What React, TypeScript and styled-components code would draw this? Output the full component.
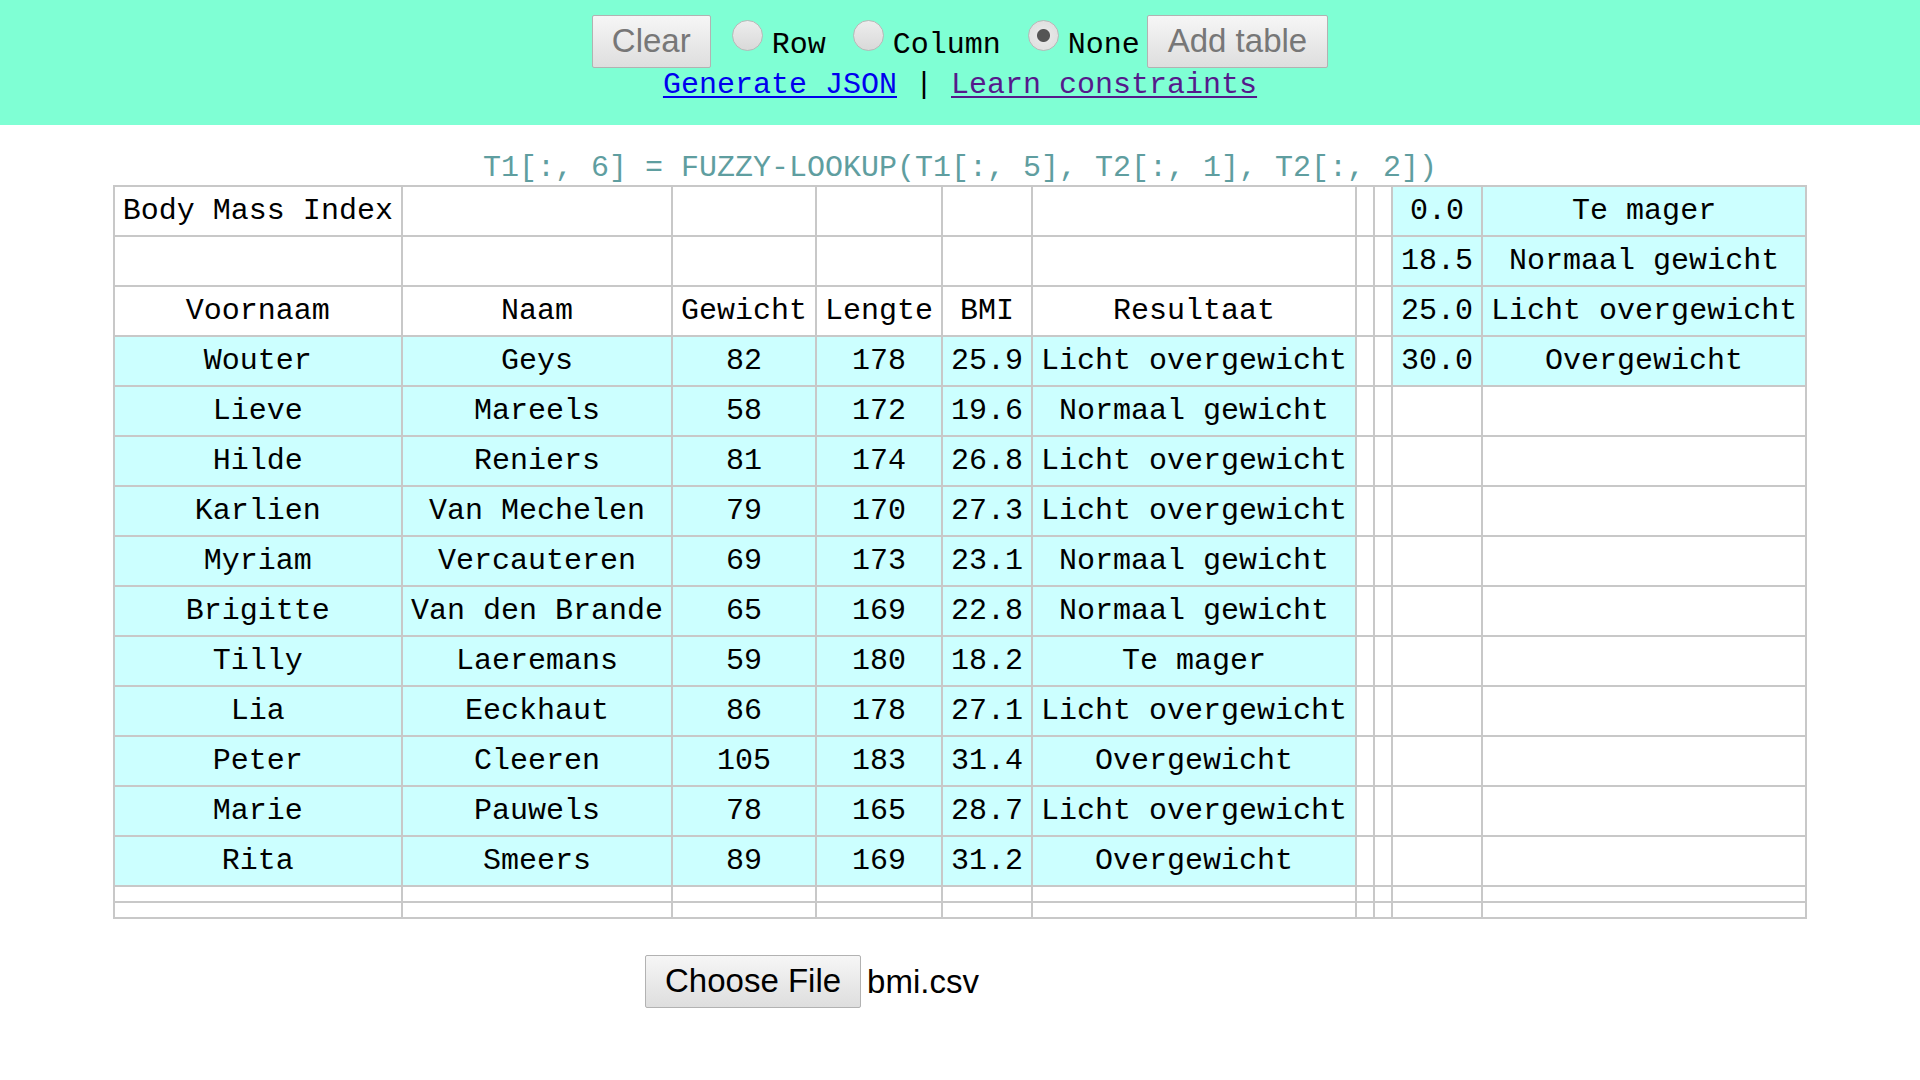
import React from "react";
import styled, { createGlobalStyle } from "styled-components";

const GlobalStyle = createGlobalStyle`
  html, body { margin: 0; padding: 0; background: #ffffff; }
  body { font-family: "Liberation Mono", "Courier New", monospace; font-size: 30px; color: #000; }
`;

const Page = styled.div`
  display: flex;
  flex-direction: column;
  align-items: center;
  width: 100%;
`;

const Header = styled.header`
  align-self: stretch;
  background: #7fffd4;
  display: flex;
  flex-direction: column;
  align-items: center;
  padding: 15px 0 23px;
`;

const Toolbar = styled.div`
  display: flex;
  align-items: flex-start;
  height: 53px;
`;

const Button = styled.button<{ $dark?: boolean }>`
  font-family: "Liberation Sans", Arial, sans-serif;
  font-size: 33px;
  line-height: 36px;
  height: 53px;
  padding: 0 19px 2px;
  color: ${(p) => (p.$dark ? "#000" : "#777")};
  background: linear-gradient(#f6f6f6, #dedede);
  border: 1px solid #b2b2b2;
  border-radius: 2px;
  margin: 0;
  cursor: pointer;
  box-sizing: border-box;
`;

const RightButton = styled(Button)`
  margin-left: 7px;
  padding: 0 20px 2px;
`;

const Radio = styled.input.attrs({ type: "radio" })`
  appearance: none;
  -webkit-appearance: none;
  width: 31px;
  height: 31px;
  margin: 5px 0 0 ${(p: { $first?: boolean }) => (p.$first ? "21px" : "27px")};
  border-radius: 50%;
  border: 1px solid #b8b8b8;
  background: linear-gradient(#ededed, #d9d9d9);
  box-sizing: border-box;
  &:checked {
    background: radial-gradient(circle, #555 0 6px, #e6e6e6 7px, #dcdcdc 100%);
  }
`;

const RadioLabel = styled.span`
  font-family: "Liberation Mono", "Courier New", monospace;
  font-size: 30px;
  line-height: 34px;
  margin: 13px 0 0 9px;
  color: #000;
`;

const LinkLine = styled.div`
  font-size: 30px;
  line-height: 34px;
  white-space: pre;
`;

const Link = styled.a<{ $visited?: boolean }>`
  color: ${(p) => (p.$visited ? "#551a8b" : "#0000ee")};
  text-decoration: underline;
  text-decoration-thickness: 2px;
  text-underline-offset: 3px;
`;

const Formula = styled.div`
  margin-top: 26px;
  color: cadetblue;
  font-size: 30px;
  line-height: 34px;
  white-space: pre;
`;

const Table = styled.table`
  border-collapse: collapse;
  font-size: 30px;
  line-height: 34px;
`;

const Cell = styled.td<{ $tone: "cyan" | "white" }>`
  border: 2px solid #c8c8c8;
  padding: 7px 8px;
  text-align: center;
  white-space: pre;
  background: ${(p) => (p.$tone === "cyan" ? "#ccffff" : "#ffffff")};
`;

const FileRow = styled.div`
  width: 630px;
  margin-top: 36px;
  display: flex;
  align-items: center;
  gap: 6px;
`;

const FileName = styled.span`
  font-family: "Liberation Sans", Arial, sans-serif;
  font-size: 33px;
  color: #000;
`;

const people: [string, string, string, string, string, string][] = [
  ["Wouter", "Geys", "82", "178", "25.9", "Licht overgewicht"],
  ["Lieve", "Mareels", "58", "172", "19.6", "Normaal gewicht"],
  ["Hilde", "Reniers", "81", "174", "26.8", "Licht overgewicht"],
  ["Karlien", "Van Mechelen", "79", "170", "27.3", "Licht overgewicht"],
  ["Myriam", "Vercauteren", "69", "173", "23.1", "Normaal gewicht"],
  ["Brigitte", "Van den Brande", "65", "169", "22.8", "Normaal gewicht"],
  ["Tilly", "Laeremans", "59", "180", "18.2", "Te mager"],
  ["Lia", "Eeckhaut", "86", "178", "27.1", "Licht overgewicht"],
  ["Peter", "Cleeren", "105", "183", "31.4", "Overgewicht"],
  ["Marie", "Pauwels", "78", "165", "28.7", "Licht overgewicht"],
  ["Rita", "Smeers", "89", "169", "31.2", "Overgewicht"],
];

const lookup: [string, string][] = [
  ["0.0", "Te mager"],
  ["18.5", "Normaal gewicht"],
  ["25.0", "Licht overgewicht"],
  ["30.0", "Overgewicht"],
];

type Row = { left: string[]; leftTone: "cyan" | "white"; right: string[] };

const buildRows = (): Row[] => {
  const rows: Row[] = [
    { left: ["Body Mass Index", "", "", "", "", ""], leftTone: "white", right: [] },
    { left: ["", "", "", "", "", ""], leftTone: "white", right: [] },
    { left: ["Voornaam", "Naam", "Gewicht", "Lengte", "BMI", "Resultaat"], leftTone: "white", right: [] },
    ...people.map((p) => ({ left: [...p], leftTone: "cyan" as const, right: [] as string[] })),
    { left: ["", "", "", "", "", ""], leftTone: "white", right: [] },
    { left: ["", "", "", "", "", ""], leftTone: "white", right: [] },
  ];
  lookup.forEach((l, i) => {
    rows[i].right = l;
  });
  return rows;
};

export default function App() {
  const rows = buildRows();
  return (
    <Page>
      <GlobalStyle />
      <Header>
        <Toolbar>
          <Button>Clear</Button>
          <Radio name="orient" $first />
          <RadioLabel>Row</RadioLabel>
          <Radio name="orient" />
          <RadioLabel>Column</RadioLabel>
          <Radio name="orient" defaultChecked />
          <RadioLabel>None</RadioLabel>
          <RightButton>Add table</RightButton>
        </Toolbar>
        <LinkLine>
          <Link href="#">Generate JSON</Link>
          {" | "}
          <Link href="#" $visited>
            Learn constraints
          </Link>
        </LinkLine>
      </Header>
      <Formula>T1[:, 6] = FUZZY-LOOKUP(T1[:, 5], T2[:, 1], T2[:, 2])</Formula>
      <Table>
        <tbody>
          {rows.map((r, i) => (
            <tr key={i}>
              {r.left.map((c, j) => (
                <Cell key={j} $tone={r.leftTone}>
                  {c}
                </Cell>
              ))}
              <Cell $tone="white" />
              <Cell $tone="white" />
              <Cell $tone={r.right.length ? "cyan" : "white"}>{r.right[0] ?? ""}</Cell>
              <Cell $tone={r.right.length ? "cyan" : "white"}>{r.right[1] ?? ""}</Cell>
            </tr>
          ))}
        </tbody>
      </Table>
      <FileRow>
        <Button $dark>Choose File</Button>
        <FileName>bmi.csv</FileName>
      </FileRow>
    </Page>
  );
}
